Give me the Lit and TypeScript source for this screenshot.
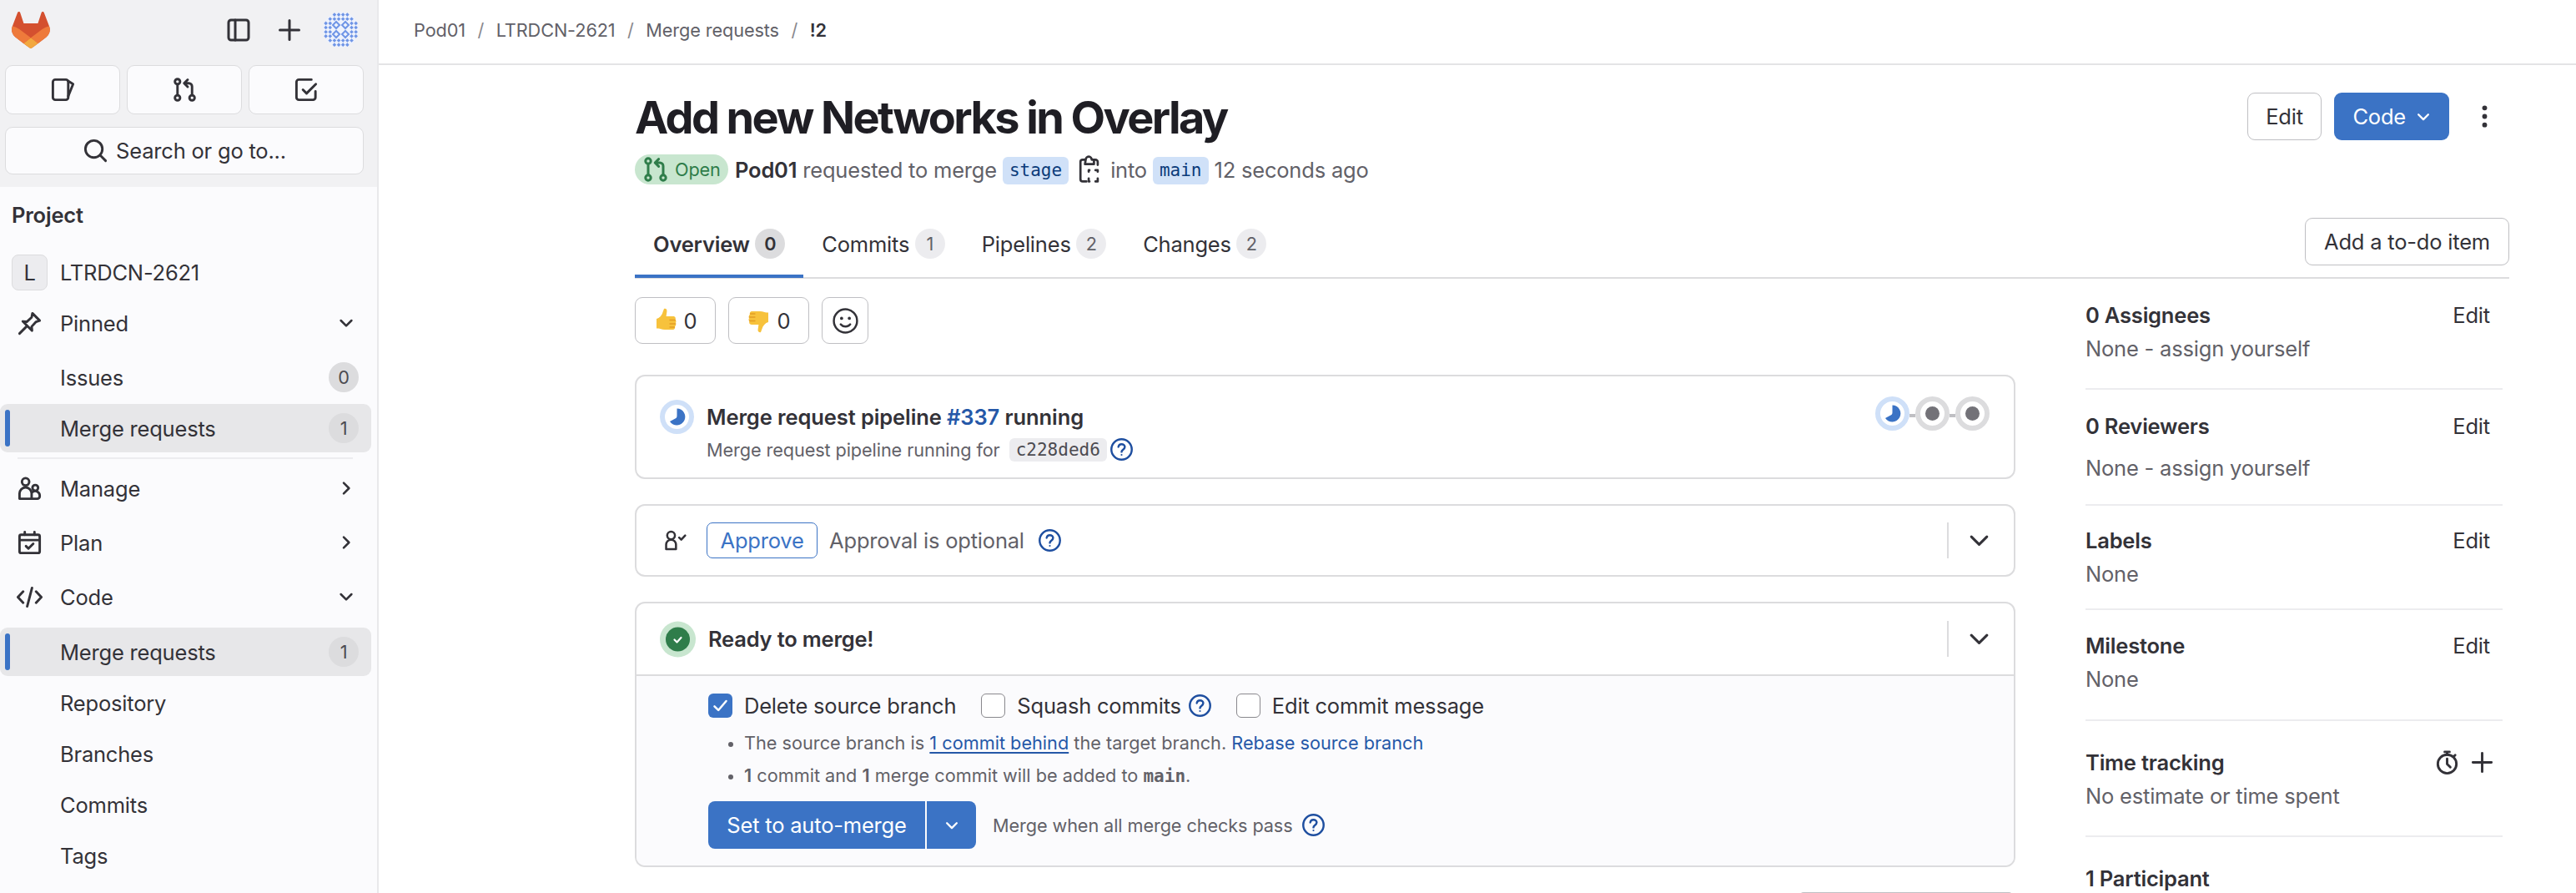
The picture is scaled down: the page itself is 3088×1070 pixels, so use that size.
import { LitElement, html, css, svg, nothing } from 'lit';
import { customElement } from 'lit/decorators.js';

const icon = (body: unknown, cls = '') =>
  html`<svg class="ico ${cls}" viewBox="0 0 16 16">${body}</svg>`;

const chevronDown = svg`<path d="M3.750 6l4.250 4.250L12.250 6"/>`;
const chevronRight = svg`<path d="M6 3.750L10.250 8 6 12.250"/>`;
const plus = svg`<path d="M8 2.250v11.500M2.250 8h11.500"/>`;
const help = svg`<circle cx="8" cy="8" r="6.750"/><path d="M5.900 6.300A2.150 2.150 0 0 1 8 4.500c1.200 0 2.150.8 2.150 1.900 0 1.700-2.150 1.700-2.150 3.200"/><circle class="solid" cx="8" cy="11.600" r=".6"/>`;
const mergeIcon = svg`<circle cx="3.500" cy="3" r="1.600"/><circle cx="3.500" cy="13" r="1.600"/><circle cx="12.500" cy="13" r="1.600"/><path d="M3.500 4.600v6.800M12.500 11.400V6a2 2 0 0 0-2-2H8M9.800 1.800L7.600 4l2.200 2.200"/>`;

// GitLab tanuki
const logo = html`<svg class="logo" viewBox="0 0 25 24">
  <path fill="#d4502f" d="M24.507 9.5l-.034-.09L21.082.562a.896.896 0 0 0-1.694.091l-2.29 7.01H7.825L5.535.653a.898.898 0 0 0-1.694-.09L.451 9.411.416 9.5a6.297 6.297 0 0 0 2.09 7.278l.012.01.03.022 5.16 3.867 2.56 1.935 1.554 1.176a1.051 1.051 0 0 0 1.268 0l1.555-1.176 2.56-1.935 5.197-3.89.014-.01A6.297 6.297 0 0 0 24.507 9.5z"/>
  <path fill="#ee7a3b" d="M24.507 9.5l-.034-.09a11.44 11.44 0 0 0-4.56 2.051l-7.447 5.632 4.742 3.584 5.197-3.89.014-.01A6.297 6.297 0 0 0 24.507 9.5z"/>
  <path fill="#f2a83f" d="M7.707 20.677l2.56 1.935 1.555 1.176a1.051 1.051 0 0 0 1.268 0l1.555-1.176 2.56-1.935-4.743-3.584-4.755 3.584z"/>
  <path fill="#ee7a3b" d="M5.01 11.461a11.43 11.43 0 0 0-4.56-2.05L.416 9.5a6.297 6.297 0 0 0 2.09 7.278l.012.01.03.022 5.16 3.867 4.745-3.584-7.444-5.632z"/>
</svg>`;

// identicon: four hollow diamonds in the middle, small marks around them
const marks: [number, number][] = [];
for (let x = 3.6; x <= 40; x += 5.15) {
  for (let y = 3.6; y <= 40; y += 5.15) {
    const inner = Math.abs(x - 21.5) < 11 && Math.abs(y - 21.5) < 11;
    if (!inner && Math.hypot(x - 21.5, y - 21.5) < 20) marks.push([x, y]);
  }
}
const avatar = html`<svg class="avatar" viewBox="0 0 43 43">
  <circle cx="21.500" cy="21.500" r="21.500" fill="#eef2fc"/>
  ${marks.map(([x, y]) => svg`<path fill="#6f95e6" d="M${x} ${y - 2.3}l2.3 2.3-2.3 2.3-2.3-2.3z"/>`)}
  ${[[16, 16], [27, 16], [16, 27], [27, 27]].map(
    ([x, y]) => svg`<path fill="none" stroke="#6f95e6" stroke-width="2" d="M${x} ${y - 4}l4 4-4 4-4-4z"/>`
  )}
</svg>`;

const thumb = (cls: string) => html`<svg class="thumb ${cls}" viewBox="0 0 28 30">
  <path fill="#f7c23c" d="M12 1c2.500-.8 3.800 1 3.400 3.400L14.600 10h8.400c2.600 0 3.400 2.400 2.500 3.900 1.400 1.300 1.200 3.300.1 4.300 1 1.300.7 3.200-.6 4 .7 1.700-.3 3.800-2.500 3.800H13c-4 0-5.500-1.200-8-1.500L3 24.500V13c3.500-1 6.500-4 7.500-8z"/>
  <path fill="none" stroke="#e39d24" stroke-width="1.300" stroke-linecap="round" d="M19 14.500h6.500M19 19h6.800M19 23h5.500"/>
</svg>`;

const runningRing = () => html`<svg class="status" viewBox="0 0 41 41">
  <circle cx="20.500" cy="20.500" r="17.500" fill="#fff" stroke="#cfe0f8" stroke-width="6"/>
  <path fill="#3b73c5" d="M20.500 10.500A10 10 0 1 1 12 26l6.500-3.500c1.500-.8 2-1.500 2-3.500z"/>
</svg>`;

const idleRing = html`<svg class="status" viewBox="0 0 41 41">
  <circle cx="20.500" cy="20.500" r="17.500" fill="#fff" stroke="#dcdcde" stroke-width="6"/>
  <circle cx="20.500" cy="20.500" r="8.500" fill="#737278"/>
</svg>`;

@customElement('app-root')
export class AppRoot extends LitElement {
  static styles = css`
    :host {
      display: block;
      width: 3088px;
      height: 1070px;
      overflow: hidden;
      background: #fff;
      color: #333238;
      font-family: Inter, 'Liberation Sans', sans-serif;
      font-size: 25.5px;
      letter-spacing: -0.2px;
    }
    * { box-sizing: border-box; }
    .layout { display: flex; height: 1070px; }

    .ico {
      width: 31px;
      height: 31px;
      flex: none;
      fill: none;
      stroke: currentColor;
      stroke-width: 1.5;
      stroke-linecap: round;
      stroke-linejoin: round;
    }
    .ico .solid { fill: currentColor; stroke: none; }
    .ico.help { color: #1f4fa0; width: 29px; height: 29px; stroke-width: 1.35; }
    .logo { width: 46px; height: 44px; flex: none; }
    .avatar { width: 43px; height: 43px; flex: none; }
    .status { width: 41px; height: 41px; flex: none; }
    .thumb { width: 28px; height: 30px; flex: none; }
    .thumb.down { transform: scale(-1, -1); }

    /* sidebar */
    .sidebar {
      width: 454px;
      flex: none;
      background: #fbfbfd;
      border-right: 2px solid #e9e9eb;
    }
    .top { height: 224px; background: #f1f1f3; padding: 13px 16px 0 6px; }
    .top-row { display: flex; align-items: center; height: 45px; padding: 0 6px 0 8px; }
    .top-row .ico { width: 32px; height: 32px; }
    .top-row .spacer { flex: 1; }
    .top-row .panel { margin-right: 29px; }
    .top-row .add { margin-right: 24px; }
    .quick { display: grid; grid-template-columns: repeat(3, 1fr); gap: 8px; margin-top: 20px; }
    .quick div {
      height: 59px;
      display: flex;
      align-items: center;
      justify-content: center;
      background: #fbfbfd;
      border: 1.5px solid #dcdcde;
      border-radius: 9px;
    }
    .search {
      height: 57px;
      margin-top: 15px;
      display: flex;
      align-items: center;
      justify-content: center;
      gap: 9px;
      background: #fbfbfd;
      border: 1.5px solid #dcdcde;
      border-radius: 9px;
    }
    .heading { height: 66px; margin-bottom: 6px; padding-left: 14px; display: flex; align-items: center; font-weight: 600; }
    .nav { display: flex; flex-direction: column; }
    .item {
      position: relative;
      height: 60px;
      display: flex;
      align-items: center;
      padding: 0 22px 0 20px;
      gap: 21px;
    }
    .item .label { flex: 1; }
    .item.sub { padding-left: 72px; }
    .item.project { padding-left: 14px; gap: 15px; margin-bottom: 1px; }
    .item.active { height: 58px; width: 445px; background: #e7e7e9; border-radius: 9px; padding-right: 15px; }
    .item.active::before {
      content: '';
      position: absolute;
      left: 6px;
      top: 7px;
      bottom: 7px;
      width: 6px;
      border-radius: 3px;
      background: #3b73c5;
    }
    .item .ico.chev { width: 24px; height: 24px; margin-right: 3px; stroke-width: 1.7; }
    .mt1 { margin-top: 1px; }
    .mt2 { margin-top: 2px; }
    .mt5 { margin-top: 5px; }
    .mt7 { margin-top: 7px; }
    .count {
      width: 36px;
      height: 36px;
      border-radius: 50%;
      display: flex;
      align-items: center;
      justify-content: center;
      background: #dcdcde;
      font-size: 21.7px;
      color: #4c4b51;
    }
    .square {
      width: 43px;
      height: 43px;
      flex: none;
      display: flex;
      align-items: center;
      justify-content: center;
      background: #ececef;
      border: 1px solid #dcdcde;
      border-radius: 8px;
    }
    .rule { height: 2px; margin: 6px 29px 5px 21px; background: #ececef; }

    /* main column */
    .main { flex: 1; min-width: 0; }
    .crumbs {
      height: 78px;
      border-bottom: 2px solid #e4e4e6;
      padding: 0 0 4px 42px;
      display: flex;
      align-items: center;
      gap: 14.5px;
      font-size: 21.7px;
      letter-spacing: -0.1px;
      color: #626168;
    }
    .crumbs .sep { color: #89888d; }
    .crumbs b { font-weight: 600; color: #333238; }
    .content { padding: 0 80px 0 307px; }
    .header { display: flex; justify-content: space-between; align-items: flex-start; padding-top: 28px; }
    h1 { margin: 0; height: 70px; line-height: 70px; font-size: 54px; font-weight: 700; color: #1f1e24; letter-spacing: -2.6px; }
    .meta { display: flex; align-items: center; height: 36px; margin-top: 9px; color: #626168; white-space: pre; }
    .meta b { font-weight: 600; color: #333238; }
    .state {
      height: 36px;
      width: 112px;
      display: flex;
      align-items: center;
      gap: 7px;
      padding-left: 9px;
      margin-right: 8px;
      border-radius: 18px;
      background: #c8e6cf;
      color: #2f7d4a;
      font-size: 21.7px;
    }
    .state .ico { width: 32px; height: 32px; }
    .chip {
      display: flex;
      align-items: center;
      height: 33px;
      margin-top: 2px;
      padding: 0 8px;
      border-radius: 6px;
      background: #d0e1f8;
      color: #0b3b7a;
      font-family: 'DejaVu Sans Mono', monospace;
      font-size: 21px;
      letter-spacing: 0;
    }
    .meta .copy { width: 26px; height: 36px; margin: 0 12px; color: #333238; }
    .actions { display: flex; align-items: center; margin-top: 5px; margin-right: 14px; }
    .btn {
      display: flex;
      align-items: center;
      justify-content: center;
      height: 57px;
      padding: 0 22px;
      background: #fff;
      border: 1.5px solid #bfbfc3;
      border-radius: 9px;
    }
    .actions .btn:first-child { padding: 0 21.5px; }
    .btn.primary { background: #3b73c5; border: none; color: #fff; gap: 10px; padding: 0 20px 0 22px; }
    .btn.primary .ico { width: 22px; height: 22px; stroke-width: 1.7; }
    .actions .btn + .btn { margin-left: 15px; }
    .actions .kebab { width: 31px; height: 31px; margin-left: 27px; }
    .kebab { fill: #333238; stroke: none; }

    .tabs {
      display: flex;
      align-items: flex-start;
      height: 73px;
      margin-top: 40px;
      border-bottom: 2px solid #dcdcde;
    }
    .tab { display: flex; align-items: center; height: 72px; padding: 0 22px 10px; gap: 6.5px; }
    .tab .badge {
      width: 36px;
      height: 36px;
      border-radius: 18px;
      display: flex;
      align-items: center;
      justify-content: center;
      background: #ececef;
      color: #626168;
      font-size: 21.7px;
    }
    .tab.on { font-weight: 600; box-shadow: inset 0 -4px 0 #3b73c5; }
    .tab.on .badge { background: #dcdcde; color: #333238; }
    .tabs .btn { margin-left: auto; }

    .columns { display: flex; }
    .left { width: 1655px; flex: none; }
    .right { width: 500px; margin-left: 84px; }

    .reactions { display: flex; gap: 15px; margin-top: 22px; }
    .reaction { height: 56px; width: 97px; padding: 0; gap: 8px; }
    .reaction.add { width: 56px; }
    .reaction .ico { width: 33px; height: 33px; stroke-width: 1.2; }

    .card { border: 2px solid #dcdcde; border-radius: 12px; margin-top: 30px; overflow: hidden; }
    .card.first { margin-top: 37px; }
    .pipeline { height: 125px; display: flex; padding: 28px 28px 0 28px; }
    .pipeline .text { margin-left: 15px; flex: 1; }
    .pipeline .title { height: 40px; display: flex; align-items: center; font-weight: 600; letter-spacing: -0.1px; white-space: pre; }
    a { color: #2558a8; text-decoration: none; }
    .pipeline .sub { height: 37px; margin-top: 1px; display: flex; align-items: center; font-size: 21.7px; letter-spacing: -0.1px; color: #626168; white-space: pre; }
    .pipeline .sub .ico.help { margin-left: 3px; }
    .hash {
      margin-left: 5px;
      height: 28px;
      padding: 0 8px;
      display: flex;
      align-items: center;
      border-radius: 6px;
      background: #ececef;
      font-family: 'DejaVu Sans Mono', monospace;
      font-size: 21px;
      letter-spacing: 0;
      color: #4c4b51;
    }
    .graph { display: flex; align-items: flex-start; margin-top: -4px; margin-right: 1px; }
    .graph .link { width: 7px; height: 4px; margin-top: 21px; background: #bfbfc3; }

    .row { display: flex; align-items: center; height: 83px; padding-left: 33px; }
    .row.tall { height: 85px; padding-left: 28px; }
    .row .lead { flex: 1; display: flex; align-items: center; }
    .row .divider { width: 2px; height: 43px; background: #dcdcde; }
    .row .toggle { width: 78px; padding-right: 6px; display: flex; justify-content: center; }
    .row .toggle .ico { width: 35px; height: 35px; stroke-width: 1.4; }
    .ico.approve-icon { width: 27px; height: 27px; margin-right: 24px; }
    .outline {
      height: 43px;
      padding: 0 15.5px;
      display: flex;
      align-items: center;
      border: 1.5px solid #3b73c5;
      border-radius: 7px;
      color: #3b73c5;
      margin-right: 14px;
    }
    .muted { color: #626168; }
    .row .ico.help { margin-left: 16px; }
    .ready-title { margin-left: 15px; font-weight: 600; }
    .ready { width: 43px; height: 44px; flex: none; }
    .merge { background: #fbfbfd; border-top: 2px solid #dcdcde; padding: 20px 0 0 86px; height: 229px; }
    .checks { display: flex; align-items: center; height: 30px; }
    .check {
      width: 29px;
      height: 29px;
      flex: none;
      margin-right: 14px;
      background: #fff;
      border: 1.5px solid #89888d;
      border-radius: 6px;
    }
    .check.on { background: #3b73c5; border: none; display: flex; align-items: center; justify-content: center; color: #fff; }
    .check.on .ico { width: 25px; height: 25px; stroke-width: 1.6; }
    .checks .spaced { margin-right: 30px; }
    .checks .ico.help { margin-left: 8px; margin-right: 29px; }
    ul { margin: 11px 0 0; padding: 0 0 0 43px; font-size: 21.7px; letter-spacing: 0; color: #626168; }
    li { height: 39px; line-height: 39px; }
    li::marker { font-size: 20px; }
    li b { font-weight: 600; }
    li u { text-underline-offset: 3px; }
    li code { font-family: 'DejaVu Sans Mono', monospace; font-size: 21px; font-weight: 700; letter-spacing: 0; }
    .split { display: flex; align-items: center; margin-top: 11px; }
    .split .go {
      width: 260px;
      height: 57px;
      display: flex;
      align-items: center;
      justify-content: center;
      background: #3b73c5;
      color: #fff;
      border-radius: 8px 0 0 8px;
    }
    .split .more {
      width: 59px;
      height: 57px;
      margin-left: 2px;
      display: flex;
      align-items: center;
      justify-content: center;
      background: #3b73c5;
      color: #fff;
      border-radius: 0 8px 8px 0;
    }
    .split .more .ico { width: 22px; height: 22px; stroke-width: 1.7; }
    .split .hint { margin-left: 20px; font-size: 21.7px; letter-spacing: -0.1px; color: #626168; }
    .split .ico.help { margin-left: 10px; }
    .peek {
      width: 254px;
      height: 4px;
      margin: 30px 4px 0 auto;
      border-top: 2px solid #bfbfc3;
      border-radius: 6px 6px 0 0;
    }

    /* right rail */
    .block { border-bottom: 2px solid #ececef; padding-right: 15px; }
    .block.last { border-bottom: none; }
    .block .head { height: 40px; display: flex; align-items: center; justify-content: space-between; font-weight: 600; }
    .block .head span:last-child:not(:first-child) { font-weight: 400; }
    .block .value { height: 40px; display: flex; align-items: center; color: #626168; }
    .block .tools { display: flex; align-items: center; gap: 11px; margin-right: -6px; }
    .assignees { padding-top: 23px; padding-bottom: 28px; }
    .reviewers { padding-top: 23px; padding-bottom: 24px; }
    .reviewers .value { margin-top: 10px; }
    .labels { padding-top: 21px; padding-bottom: 22px; }
    .milestone { padding-top: 22px; padding-bottom: 29px; }
    .time { padding-top: 29px; padding-bottom: 28px; }
    .participants { padding-top: 29px; }
  `;

  private sidebar() {
    return html`<aside class="sidebar">
      <div class="top">
        <div class="top-row">
          ${logo}
          <span class="spacer"></span>
          ${icon(svg`<rect x="2" y="2" width="12" height="12" rx="1.500"/><path d="M6 2v12"/>`, 'panel')}
          ${icon(plus, 'add')}
          ${avatar}
        </div>
        <div class="quick">
          <div>${icon(svg`<rect x="1.750" y="1.750" width="9.500" height="12.500" rx="1.500"/><path d="M11 2.500l3.250 2L11.250 12"/>`)}</div>
          <div>${icon(mergeIcon)}</div>
          <div>${icon(svg`<path d="M13.500 9v3.750a1.500 1.500 0 0 1-1.500 1.500H3.250a1.500 1.500 0 0 1-1.500-1.500V3.250a1.500 1.500 0 0 1 1.500-1.500H11"/><path d="M5.750 8l2.250 2.250 5.750-5.750"/>`)}</div>
        </div>
        <div class="search">
          ${icon(svg`<circle cx="7" cy="7" r="5.250"/><path d="M11 11l3.250 3.250"/>`)}
          <span>Search or go to...</span>
        </div>
      </div>
      <div class="heading">Project</div>
      <div class="nav">
        <div class="item project"><span class="square">L</span><span class="label">LTRDCN-2621</span></div>
        <div class="item">
          ${icon(svg`<path d="M1.750 14.250L6 10M9.750 1.750l4.500 4.500-2.250.750-2.750 3 .250 2.500-5.750-5.750 2.500.250 3-2.750z"/>`)}
          <span class="label">Pinned</span>${icon(chevronDown, 'chev')}
        </div>
        <div class="item sub mt5"><span class="label">Issues</span><span class="count">0</span></div>
        <div class="item sub active mt2"><span class="label">Merge requests</span><span class="count">1</span></div>
        <div class="rule"></div>
        <div class="item">
          ${icon(svg`<circle cx="5.500" cy="3.750" r="2.250"/><path d="M1.750 14.250V11a3.750 3.750 0 0 1 7.500 0v3.250zM11.500 9.250a1.750 1.750 0 1 0 0-3.500 1.750 1.750 0 0 0 0 3.500zM9.250 14.250h3.500a1.500 1.500 0 0 0 1.500-1.500v-.5a2.750 2.750 0 0 0-4.500-2.100"/>`)}
          <span class="label">Manage</span>${icon(chevronRight, 'chev')}
        </div>
        <div class="item mt5">
          ${icon(svg`<rect x="1.750" y="3" width="12.500" height="11.250" rx="1"/><path d="M1.750 6.250h12.500M5 1.250V3M11 1.250V3M5.750 10l1.500 1.500 3-3"/>`)}
          <span class="label">Plan</span>${icon(chevronRight, 'chev')}
        </div>
        <div class="item mt5">
          ${icon(svg`<path d="M4 4.500L.75 8 4 11.500M12 4.500L15.250 8 12 11.500M9.500 2.250L6.500 13.750"/>`)}
          <span class="label">Code</span>${icon(chevronDown, 'chev')}
        </div>
        <div class="item sub active mt7"><span class="label">Merge requests</span><span class="count">1</span></div>
        <div class="item sub mt2"><span class="label">Repository</span></div>
        <div class="item sub mt1"><span class="label">Branches</span></div>
        <div class="item sub mt1"><span class="label">Commits</span></div>
        <div class="item sub mt1"><span class="label">Tags</span></div>
      </div>
    </aside>`;
  }

  private mergeCards() {
    return html`
      <div class="card first pipeline">
        ${runningRing()}
        <div class="text">
          <div class="title">Merge request pipeline <a>#337</a> running</div>
          <div class="sub">Merge request pipeline running for <span class="hash">c228ded6</span>${icon(help, 'help')}</div>
        </div>
        <div class="graph">
          ${runningRing()}<span class="link"></span>${idleRing}<span class="link"></span>${idleRing}
        </div>
      </div>
      <div class="card">
        <div class="row">
          <div class="lead">
            ${icon(svg`<circle cx="5" cy="4.500" r="2.750"/><path d="M1.500 14.250V11a3.500 3.500 0 0 1 7 0v3.250zM10.750 6l1.500 1.500 2.750-3"/>`, 'approve-icon')}
            <span class="outline">Approve</span>
            <span class="muted">Approval is optional</span>
            ${icon(help, 'help')}
          </div>
          <span class="divider"></span>
          <span class="toggle">${icon(chevronDown)}</span>
        </div>
      </div>
      <div class="card">
        <div class="row tall">
          <div class="lead">
            <svg class="ready" viewBox="0 0 43 44">
              <circle cx="21.500" cy="22" r="21.500" fill="#c8e6cf"/>
              <circle cx="21.500" cy="22" r="14.500" fill="#2f7d4a"/>
              <path d="M17.500 22.500l3 3 5-5.500" fill="none" stroke="#fff" stroke-width="2.200" stroke-linecap="round" stroke-linejoin="round"/>
            </svg>
            <span class="ready-title">Ready to merge!</span>
          </div>
          <span class="divider"></span>
          <span class="toggle">${icon(chevronDown)}</span>
        </div>
        <div class="merge">
          <div class="checks">
            <span class="check on">${icon(svg`<path d="M3.500 8.500l3 3 6-7"/>`)}</span>
            <span class="spaced">Delete source branch</span>
            <span class="check"></span>
            <span>Squash commits</span>
            ${icon(help, 'help')}
            <span class="check"></span>
            <span>Edit commit message</span>
          </div>
          <ul>
            <li>The source branch is <a><u>1 commit behind</u></a> the target branch. <a>Rebase source branch</a></li>
            <li><b>1</b> commit and <b>1</b> merge commit will be added to <code>main</code>.</li>
          </ul>
          <div class="split">
            <span class="go">Set to auto-merge</span>
            <span class="more">${icon(chevronDown)}</span>
            <span class="hint">Merge when all merge checks pass</span>
            ${icon(help, 'help')}
          </div>
        </div>
      </div>
      <div class="peek"></div>
    `;
  }

  private rail() {
    const block = (cls: string, title: string, value: string, tool: unknown = html`<span>Edit</span>`) =>
      html`<div class="block ${cls}">
        <div class="head"><span>${title}</span>${tool}</div>
        ${value ? html`<div class="value">${value}</div>` : nothing}
      </div>`;
    const timer = html`<span class="tools">
      ${icon(svg`<circle cx="8" cy="9" r="5.750"/><path d="M8 5.750V9l2 2M6.500 1.500h3M8 1.500v1.750M13 3.500l-1 1"/>`)}
      ${icon(plus)}
    </span>`;
    return html`<div class="right">
      ${block('assignees', '0 Assignees', 'None - assign yourself')}
      ${block('reviewers', '0 Reviewers', 'None - assign yourself')}
      ${block('labels', 'Labels', 'None')}
      ${block('milestone', 'Milestone', 'None')}
      ${block('time', 'Time tracking', 'No estimate or time spent', timer)}
      ${block('participants last', '1 Participant', '', nothing)}
    </div>`;
  }

  render() {
    return html`<div class="layout">
      ${this.sidebar()}
      <main class="main">
        <nav class="crumbs">
          <span>Pod01</span><span class="sep">/</span>
          <span>LTRDCN-2621</span><span class="sep">/</span>
          <span>Merge requests</span><span class="sep">/</span>
          <b>!2</b>
        </nav>
        <div class="content">
          <div class="header">
            <div>
              <h1>Add new Networks in Overlay</h1>
              <div class="meta">
                <span class="state">${icon(mergeIcon)}Open</span>
                <b>Pod01</b> requested to merge <span class="chip">stage</span>
                <svg class="ico copy" viewBox="0 0 14 20">
                  <path d="M4 3.500H2.500a1.500 1.500 0 0 0-1.500 1.500v11.500a1.500 1.500 0 0 0 1.500 1.500H5M4.500 3.500c0-1 .8-2 2-2s2 1 2 2H10v3H4zM10 3.500h1a1.500 1.500 0 0 1 1.500 1.500v2"/>
                  <path d="M7 10.500H6.500v1M11 10.500h1.500v1M6.500 16v2H7M11 18h1.500v-2"/>
                </svg>
                <span>into </span><span class="chip">main</span><span> 12 seconds ago</span>
              </div>
            </div>
            <div class="actions">
              <span class="btn">Edit</span>
              <span class="btn primary">Code ${icon(chevronDown)}</span>
              <svg class="ico kebab" viewBox="0 0 16 16"><circle cx="8" cy="2.750" r="1.500"/><circle cx="8" cy="8" r="1.500"/><circle cx="8" cy="13.250" r="1.500"/></svg>
            </div>
          </div>
          <div class="tabs">
            <div class="tab on">Overview <span class="badge">0</span></div>
            <div class="tab">Commits <span class="badge">1</span></div>
            <div class="tab">Pipelines <span class="badge">2</span></div>
            <div class="tab">Changes <span class="badge">2</span></div>
            <span class="btn">Add a to-do item</span>
          </div>
          <div class="columns">
            <div class="left">
              <div class="reactions">
                <span class="btn reaction">${thumb('up')}0</span>
                <span class="btn reaction">${thumb('down')}0</span>
                <span class="btn reaction add">${icon(svg`<circle cx="8" cy="8" r="6.750"/><circle class="solid" cx="5.750" cy="6.500" r=".9"/><circle class="solid" cx="10.250" cy="6.500" r=".9"/><path d="M5.250 10c1.500 1.750 4 1.750 5.500 0"/>`)}</span>
              </div>
              ${this.mergeCards()}
            </div>
            ${this.rail()}
          </div>
        </div>
      </main>
    </div>`;
  }
}

declare global {
  interface HTMLElementTagNameMap {
    'app-root': AppRoot;
  }
}
